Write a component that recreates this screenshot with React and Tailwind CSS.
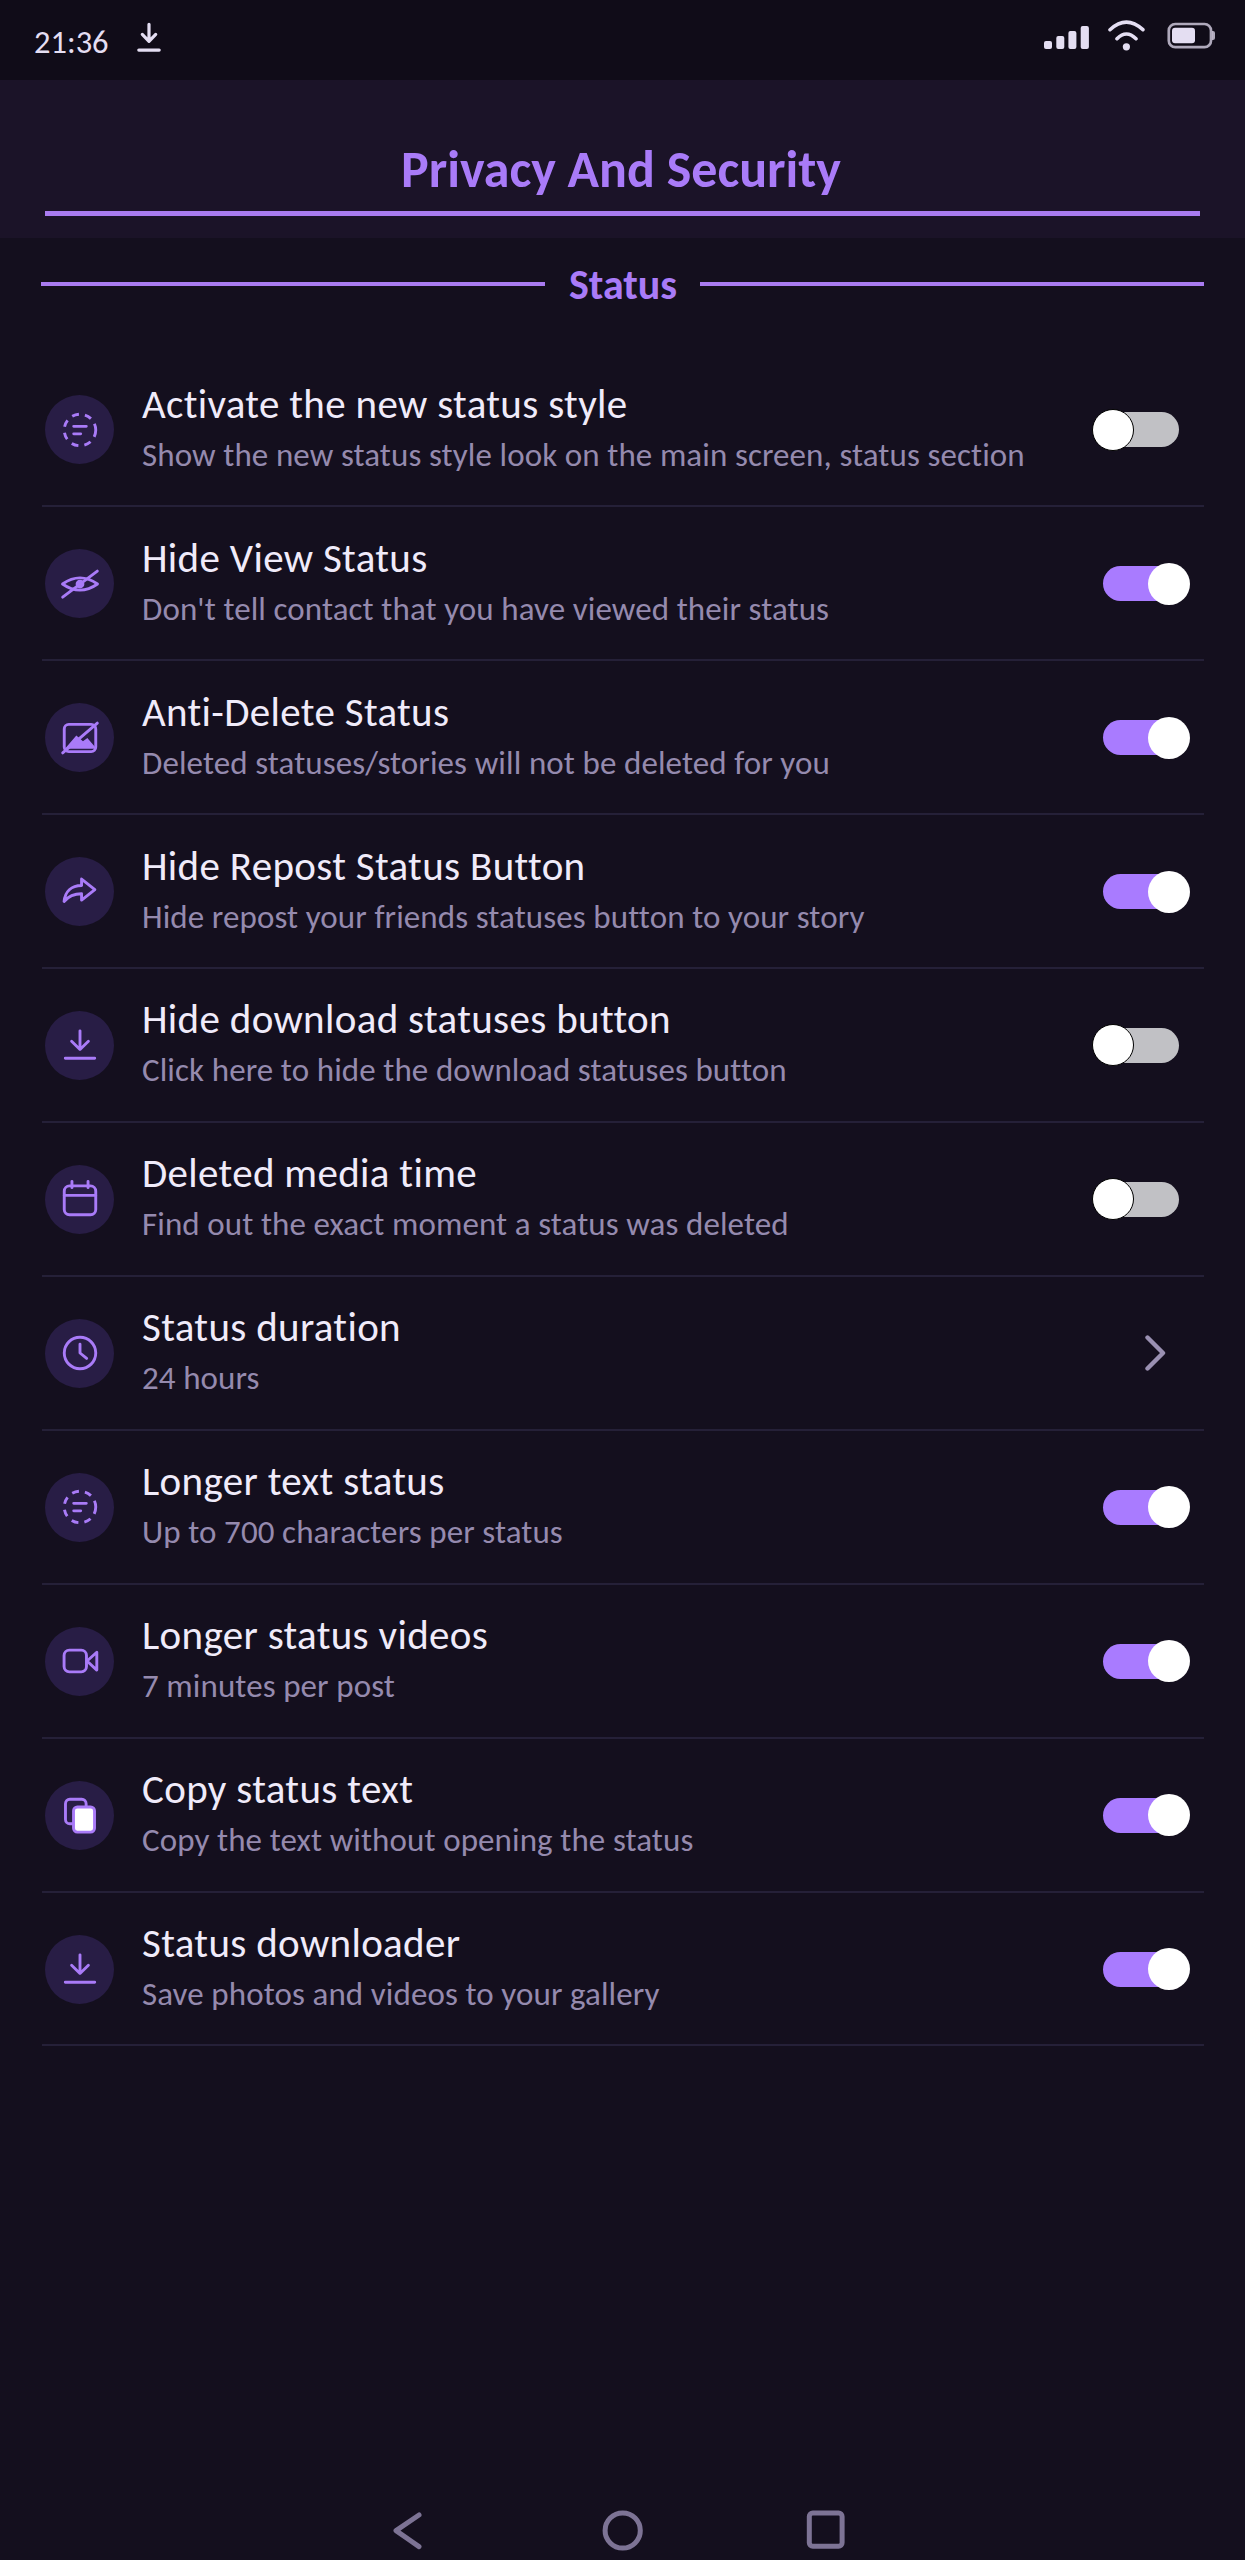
import React from "react";

const ICONS = {
  status: (
    <>
      <circle cx="12" cy="12" r="9" strokeDasharray="4 3.5" strokeLinecap="butt" />
      <path d="M8.4 9.9h7.2M8.4 14.2h4" />
    </>
  ),
  eyeOff: (
    <>
      <path d="M2 12Q12 5 22 12Q12 19 2 12Z" />
      <circle cx="12" cy="12" r="2.5" fill="currentColor" stroke="none" />
      <path d="M2.1 19.5 21.9 4.6" />
    </>
  ),
  imageOff: (
    <>
      <rect x="3" y="4.2" width="18" height="15.6" rx="2.6" />
      <path d="M3.4 18.2 9.9 10.6l3.8 3.2L16.2 12l4.8 5.6v.6z" fill="currentColor" stroke="none" />
      <path d="M2.1 20.5 21.9 3.5" />
    </>
  ),
  share: <path d="M12.9 4.6 20.5 10.6 12.9 16.6V13C9 13 5.6 14.2 2.9 17.4 3.5 11.8 7 8.3 12.9 8.3Z" />,
  download: <path d="M12 3.9v10.6M7.2 9.9l4.8 4.7 4.8-4.7M3.6 19.6h16.8" />,
  calendar: (
    <>
      <rect x="3" y="4.5" width="18" height="16.5" rx="3" />
      <path d="M3 9.9h18M7.4 1.9v3.6M16.6 1.9v3.6" />
    </>
  ),
  clock: (
    <>
      <circle cx="12" cy="12" r="9" />
      <path d="M12 7v5l3.8 3.1" />
    </>
  ),
  video: (
    <>
      <rect x="2.9" y="5.8" width="12.8" height="12.4" rx="3" />
      <path d="M16 12 21.6 7v10.2z" />
    </>
  ),
  copy: (
    <>
      <rect x="3.7" y="3" width="11.8" height="14" rx="2.5" />
      <rect x="8.3" y="7.4" width="12" height="14.4" rx="2.2" fill="#fff" />
    </>
  ),
};

const ROWS = [
  ["status", "Activate the new status style", "Show the new status style look on the main screen, status section", "off"],
  ["eyeOff", "Hide View Status", "Don't tell contact that you have viewed their status", "on"],
  ["imageOff", "Anti-Delete Status", "Deleted statuses/stories will not be deleted for you", "on"],
  ["share", "Hide Repost Status Button", "Hide repost your friends statuses button to your story", "on"],
  ["download", "Hide download statuses button", "Click here to hide the download statuses button", "off"],
  ["calendar", "Deleted media time", "Find out the exact moment a status was deleted", "off"],
  ["clock", "Status duration", "24 hours", "link"],
  ["status", "Longer text status", "Up to 700 characters per status", "on"],
  ["video", "Longer status videos", "7 minutes per post", "on"],
  ["copy", "Copy status text", "Copy the text without opening the status", "on"],
  ["download", "Status downloader", "Save photos and videos to your gallery", "on"],
];

function Toggle({ on }) {
  return on ? (
    <div className="mr-[14px] flex h-[42px] w-[87px] items-center">
      <div className="flex h-[35px] w-[80px] items-center rounded-full bg-[#a97bff]">
        <div className="ml-[45px] size-[42px] shrink-0 rounded-full bg-white" />
      </div>
    </div>
  ) : (
    <div className="mr-[25px] flex h-[42px] w-[87px] items-center justify-end">
      <div className="flex h-[35px] w-[80px] items-center justify-end rounded-full bg-[#c1c1c5]">
        <div className="mr-[45px] size-[42px] shrink-0 rounded-full border border-black bg-white" />
      </div>
    </div>
  );
}

function Row({ icon, title, text, control }) {
  return (
    <div className="flex h-[153.96px] items-center border-b-2 border-[#252038] pt-[1.4px] pl-[3px]">
      <div className="flex size-[69px] shrink-0 items-center justify-center rounded-full bg-[#281d45] text-[#a97bf8]">
        <svg
          viewBox="0 0 24 24"
          className="size-[42px] overflow-visible"
          fill="none"
          stroke="currentColor"
          strokeWidth="1.65"
          strokeLinecap="round"
          strokeLinejoin="round"
        >
          {ICONS[icon]}
        </svg>
      </div>
      <div className="ml-[28px] flex-1 whitespace-nowrap">
        <div className="h-[50px] text-[41px] leading-[48px] tracking-[0.33px] text-[#f0ebfa]">{title}</div>
        <div className="text-[33px] leading-[50px] tracking-[0.09px] text-[#958aae]">{text}</div>
      </div>
      {control === "link" ? (
        <svg
          viewBox="0 0 24 36"
          className="mr-[36px] h-9 w-6"
          fill="none"
          stroke="#9a90b2"
          strokeWidth="4.4"
          strokeLinecap="round"
          strokeLinejoin="round"
        >
          <path d="M3.5 2.5 19 18 3.5 33.5" />
        </svg>
      ) : (
        <Toggle on={control === "on"} />
      )}
    </div>
  );
}

export default function App() {
  return (
    <div className="flex h-[2560px] w-[1245px] flex-col overflow-hidden bg-[#140f1e] font-['Carlito','Lato',sans-serif]">
      <div className="flex h-20 shrink-0 items-start justify-between bg-[#100c18] pl-[34px]">
        <div className="flex">
          <span className="mt-[22px] text-[32.5px] leading-10 text-[#e4def2]">21:36</span>
          <svg
            viewBox="0 0 24 30"
            className="mt-[22px] ml-[28px] h-[30px] w-6"
            fill="none"
            stroke="#e4def2"
            strokeWidth="3.2"
            strokeLinecap="round"
            strokeLinejoin="round"
          >
            <path d="M12 2.3v16.7M5.3 12.4l6.7 6.9 6.7-6.9M1.8 28.1h20.4" />
          </svg>
        </div>
        <svg viewBox="1040 16 205 40" className="mt-4 h-10 w-[205px]" fill="none" stroke="#e4def2" strokeLinecap="round">
          <g fill="#e4def2" stroke="none">
            <rect x="1044" y="41" width="8" height="8" rx="2" />
            <rect x="1056.3" y="36" width="8" height="13" rx="2" />
            <rect x="1068.4" y="31" width="8" height="18" rx="2" />
            <rect x="1080.7" y="26" width="8.2" height="23" rx="2" />
            <circle cx="1126.4" cy="46.8" r="3.6" />
            <rect x="1172" y="27.8" width="23" height="15.5" rx="3" />
            <path d="M1212 31h1a2 2 0 0 1 2 2v5a2 2 0 0 1-2 2h-1z" opacity=".75" />
          </g>
          <path d="M1110 29.7Q1126.4 14.6 1142.9 29.7M1117 38.7Q1126.4 29.2 1136 38.7" strokeWidth="3.6" />
          <rect x="1168.8" y="24" width="42.2" height="23.2" rx="6.5" strokeWidth="2.7" opacity=".75" />
        </svg>
      </div>

      <header className="flex h-[158px] shrink-0 flex-col bg-[#1b1328] px-[45px]">
        <h1 className="mt-[57px] h-[74px] pr-[3px] text-center text-[52px] leading-[64px] font-bold text-[#a97bf8]">
          Privacy And Security
        </h1>
        <div className="h-[4.6px] bg-[#a97bf0]" />
      </header>

      <div className="mx-[41px] flex h-[115px] shrink-0 items-start">
        <div className="mt-11 h-[3.6px] flex-1 bg-[#a97bf0]" />
        <h2 className="mr-[23px] ml-6 mt-[22px] text-[42px] leading-[50px] font-bold text-[#a97bf8]">Status</h2>
        <div className="mt-11 h-[3.6px] flex-1 bg-[#a97bf0]" />
      </div>

      <main className="mr-[41px] ml-[42px]">
        {ROWS.map(([icon, title, text, control]) => (
          <Row key={title} icon={icon} title={title} text={text} control={control} />
        ))}
      </main>

      <nav className="mt-auto flex shrink-0 items-center pb-2 pl-[390px]">
        <svg
          viewBox="390 2508 460 44"
          className="h-11 w-[460px]"
          fill="none"
          stroke="#7d7395"
          strokeWidth="5"
          strokeLinecap="round"
          strokeLinejoin="round"
        >
          <path d="M419 2515 396 2530.6 419 2546.6" />
          <circle cx="622.7" cy="2530.5" r="17.6" />
          <rect x="809.3" y="2513" width="32.8" height="33.3" rx="3.5" />
        </svg>
      </nav>
    </div>
  );
}
